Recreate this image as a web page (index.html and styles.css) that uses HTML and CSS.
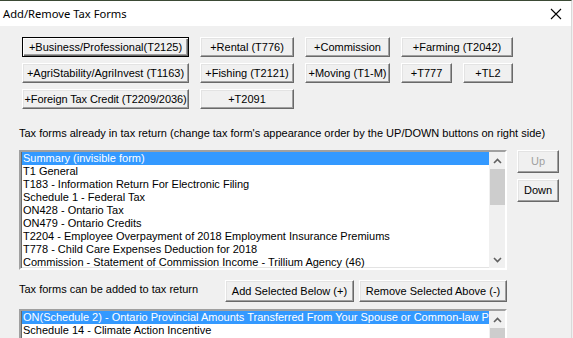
FILE: index.html
```html
<!DOCTYPE html>
<html>
<head>
<meta charset="utf-8">
<title>Add/Remove Tax Forms</title>
<link rel="stylesheet" href="styles.css">
</head>
<body>
<div class="window">
  <div class="titlebar">
    <span class="title">Add/Remove Tax Forms</span>
    <span class="close">
      <svg width="12" height="12" viewBox="0 0 12 12"><path d="M1 1 L11 11 M11 1 L1 11" stroke="#000" stroke-width="1.1" fill="none"/></svg>
    </span>
  </div>
  <div class="client">
    <div class="addgrid">
      <div class="brow">
        <button class="btn default w167">+Business/Professional(T2125)</button>
        <button class="btn w94">+Rental (T776)</button>
        <button class="btn w85">+Commission</button>
        <button class="btn w112">+Farming (T2042)</button>
      </div>
      <div class="brow">
        <button class="btn w167">+AgriStability/AgriInvest (T1163)</button>
        <button class="btn w94">+Fishing (T2121)</button>
        <button class="btn w85">+Moving (T1-M)</button>
        <button class="btn w51">+T777</button>
        <button class="btn w50">+TL2</button>
      </div>
      <div class="brow">
        <button class="btn w167 tight">+Foreign Tax Credit (T2209/2036)</button>
        <button class="btn w94">+T2091</button>
      </div>
    </div>

    <div class="label label1">Tax forms already in tax return (change tax form's appearance order by the UP/DOWN buttons on right side)</div>

    <div class="listrow">
      <div class="listbox lb1">
        <ul class="items">
          <li class="sel">Summary (invisible form)</li>
          <li>T1 General</li>
          <li>T183 - Information Return For Electronic Filing</li>
          <li>Schedule 1 - Federal Tax</li>
          <li>ON428 - Ontario Tax</li>
          <li>ON479 - Ontario Credits</li>
          <li>T2204 - Employee Overpayment of 2018 Employment Insurance Premiums</li>
          <li>T778 - Child Care Expenses Deduction for 2018</li>
          <li>Commission - Statement of Commission Income - Trillium Agency (46)</li>
        </ul>
        <div class="vscroll">
          <div class="arrow"><svg width="9" height="6" viewBox="0 0 9 6"><path d="M1 5 L4.5 1.5 L8 5" stroke="#606060" stroke-width="1.6" fill="none"/></svg></div>
          <div class="track"><div class="thumb t1"></div></div>
          <div class="arrow"><svg width="9" height="6" viewBox="0 0 9 6"><path d="M1 1 L4.5 4.5 L8 1" stroke="#606060" stroke-width="1.6" fill="none"/></svg></div>
        </div>
      </div>
      <div class="updown">
        <button class="btn small" disabled>Up</button>
        <button class="btn small">Down</button>
      </div>
    </div>

    <div class="actionrow">
      <span class="label label2">Tax forms can be added to tax return</span>
      <button class="btn act w129">Add Selected Below (+)</button>
      <button class="btn act w148">Remove Selected Above (-)</button>
    </div>

    <div class="listbox lb2">
      <ul class="items">
        <li class="sel">ON(Schedule 2) - Ontario Provincial Amounts Transferred From Your Spouse or Common-law Partner</li>
        <li>Schedule 14 - Climate Action Incentive</li>
      </ul>
      <div class="vscroll">
        <div class="arrow"><svg width="9" height="6" viewBox="0 0 9 6"><path d="M1 5 L4.5 1.5 L8 5" stroke="#606060" stroke-width="1.6" fill="none"/></svg></div>
        <div class="track"><div class="thumb t2"></div></div>
      </div>
    </div>
  </div>
</div>
</body>
</html>
```

FILE: styles.css
```css
* { box-sizing: border-box; }

html, body {
  margin: 0;
  padding: 0;
  width: 573px;
  height: 338px;
  overflow: hidden;
  background: #f0f0f0;
}

.window {
  width: 572px;
  height: 338px;
  background: #f0f0f0;
  border-top: 1px solid #3b4a35;
  border-right: 1px solid #d9d9d9;
  overflow: hidden;
  font-family: "Liberation Sans", Arial, sans-serif;
  font-size: 11px;
  color: #000;
}

.titlebar {
  height: 25px;
  background: #fff;
  display: flex;
  align-items: center;
  justify-content: space-between;
  padding-left: 3px;
}

.title {
  font-family: "Noto Sans", "Open Sans", sans-serif;
  font-size: 11.2px;
  color: #000;
}

.close {
  width: 30px;
  display: flex;
  justify-content: center;
  align-items: center;
  margin-top: 1px;
}

.client {
  padding: 11px 0 0 19px;
}

.addgrid {
  margin-left: 3px;
  display: flex;
  flex-direction: column;
  gap: 6px;
}

.brow {
  display: flex;
  gap: 11px;
}

.btn {
  font-family: "Liberation Sans", Arial, sans-serif;
  font-size: 11px;
  color: #000;
  background: #f0f0f0;
  height: 20px;
  padding: 0;
  margin: 0;
  border: 1px solid;
  border-color: #ffffff #696969 #696969 #ffffff;
  box-shadow: inset -1px -1px 0 #a0a0a0, inset 1px 1px 0 #e3e3e3;
  white-space: nowrap;
  text-align: center;
  line-height: 16px;
}

.btn.default {
  border-color: #000;
  box-shadow: inset 1px 1px 0 #fff, inset -1px -1px 0 #696969, inset -2px -2px 0 #a0a0a0;
}

.btn.tight { letter-spacing: -0.1px; }

.btn[disabled] { color: #a0a0a0; }

.w167 { width: 167px; }
.w94 { width: 94px; }
.w85 { width: 85px; }
.w112 { width: 112px; }
.w51 { width: 51px; }
.w50 { width: 50px; }
.w129 { width: 129px; }
.w148 { width: 148px; }

.label {
  line-height: 13px;
  white-space: nowrap;
}

.label1 {
  margin-top: 18px;
  height: 13px;
}

.listrow {
  margin-top: 10px;
  display: flex;
  align-items: flex-start;
}

.listbox {
  width: 488px;
  background: #fff;
  border: 2px solid;
  border-color: #a0a0a0 #ffffff #ffffff #a0a0a0;
  box-shadow: inset 1px 1px 0 #696969, inset -1px -1px 0 #e3e3e3;
  display: flex;
  overflow: hidden;
}

.lb1 { height: 120px; }

.lb2 {
  margin-top: 7px;
  height: 60px;
}

.items {
  list-style: none;
  margin: 0;
  padding: 0 0 0 1px;
  flex: 1;
  overflow: hidden;
  min-width: 0;
}

.items li {
  height: 13px;
  line-height: 13px;
  padding-left: 1px;
  white-space: nowrap;
  overflow: hidden;
}

.items li.sel {
  background: #3399ff;
  color: #fff;
}

.vscroll {
  width: 17px;
  flex: none;
  display: flex;
  flex-direction: column;
  background: #f0f0f0;
  margin-right: -1px;
}

.arrow {
  height: 17px;
  flex: none;
  display: flex;
  align-items: center;
  justify-content: center;
}

.track {
  flex: 1;
  padding: 0 1px;
}

.thumb {
  background: #cdcdcd;
}

.t1 { height: 36px; }
.t2 { height: 30px; }

.updown {
  margin-left: 10px;
  display: flex;
  flex-direction: column;
  gap: 6px;
}

.btn.small {
  width: 42px;
  height: 23px;
  line-height: 19px;
}

.actionrow {
  margin-top: 10px;
  width: 488px;
  display: flex;
  align-items: center;
  gap: 5px;
}

.label2 {
  flex: 1;
  margin-top: -3px;
}

.btn.act {
  height: 22px;
  line-height: 18px;
}
```
